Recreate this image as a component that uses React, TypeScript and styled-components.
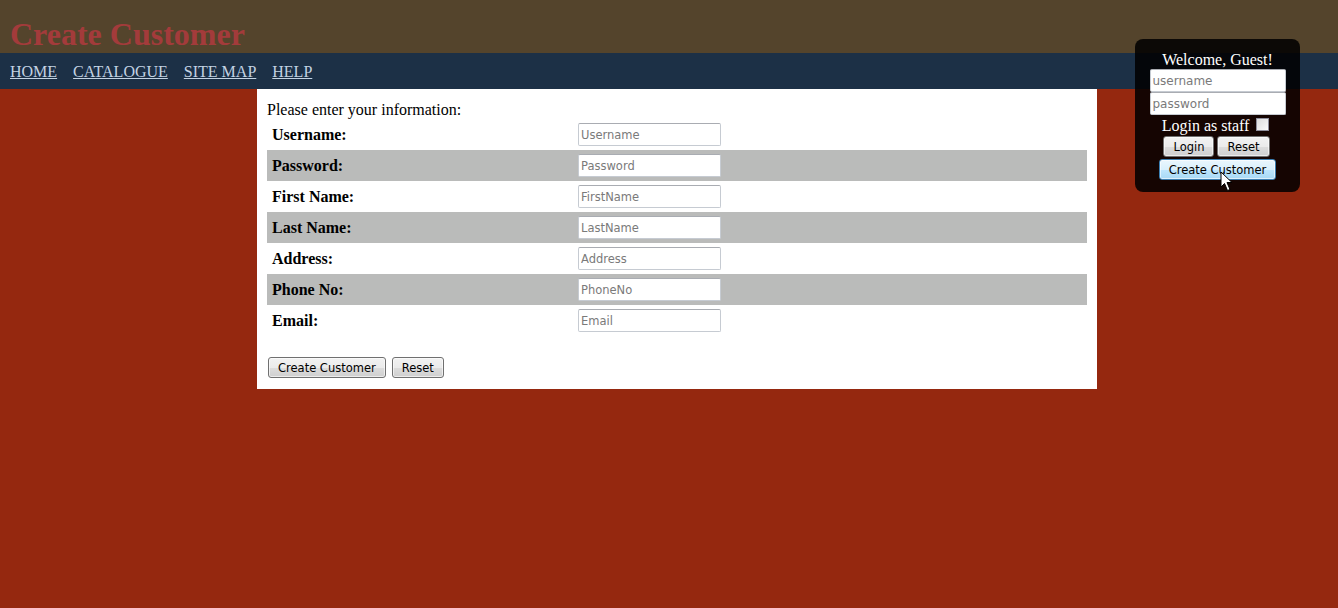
import React from "react";
import styled, { createGlobalStyle, css } from "styled-components";

const GlobalStyle = createGlobalStyle`
  html, body {
    margin: 0;
    padding: 0;
  }
  body {
    background: #95280f;
    font-family: "Liberation Serif", "Times New Roman", serif;
    font-size: 16px;
    min-height: 608px;
  }
`;

const fields = [
  { label: "Username:", placeholder: "Username", type: "text" },
  { label: "Password:", placeholder: "Password", type: "password" },
  { label: "First Name:", placeholder: "FirstName", type: "text" },
  { label: "Last Name:", placeholder: "LastName", type: "text" },
  { label: "Address:", placeholder: "Address", type: "text" },
  { label: "Phone No:", placeholder: "PhoneNo", type: "text" },
  { label: "Email:", placeholder: "Email", type: "text" },
];

const links = ["HOME", "CATALOGUE", "SITE MAP", "HELP"];

export default function App() {
  return (
    <Page>
      <GlobalStyle />
      <Header>
        <Title>Create Customer</Title>
      </Header>
      <Nav>
        {links.map((l) => (
          <NavLink key={l} href="#">
            {l}
          </NavLink>
        ))}
      </Nav>

      <Panel>
        <Intro>Please enter your information:</Intro>
        <FormTable>
          {fields.map((f, i) => (
            <Row key={f.label} $striped={i % 2 === 1}>
              <LabelCell>{f.label}</LabelCell>
              <InputCell>
                <TextInput type={f.type} placeholder={f.placeholder} />
              </InputCell>
            </Row>
          ))}
        </FormTable>
        <Actions>
          <Button>Create Customer</Button>
          <Button>Reset</Button>
        </Actions>
      </Panel>

      <LoginBox>
        <Welcome>Welcome, Guest!</Welcome>
        <BoxInput type="text" placeholder="username" />
        <BoxInput type="password" placeholder="password" />
        <StaffRow>
          Login as staff <Checkbox type="checkbox" />
        </StaffRow>
        <ButtonRow>
          <Button>Login</Button>
          <Button>Reset</Button>
        </ButtonRow>
        <Button $hover>Create Customer</Button>
        <Cursor width="14" height="21" viewBox="0 0 14 21">
          <path
            d="M1 1 L1 16 L4.5 12.5 L7.5 19.5 L10 18.5 L7 11.5 L12 11.5 Z"
            fill="#ffffff"
            stroke="#000000"
            strokeWidth="1"
            strokeLinejoin="round"
          />
        </Cursor>
      </LoginBox>
    </Page>
  );
}

const Page = styled.div`
  position: relative;
  min-height: 608px;
`;

const Header = styled.header`
  height: 53px;
  background: #54442c;
  box-sizing: border-box;
  padding: 18px 0 0 10px;
`;

const Title = styled.h1`
  margin: 0;
  font-size: 32px;
  line-height: 32px;
  font-weight: bold;
  color: #a33b3b;
`;

const Nav = styled.nav`
  height: 36px;
  background: #1c3046;
  display: flex;
  align-items: center;
  gap: 16px;
  padding: 2px 0 0 10px;
  box-sizing: border-box;
`;

const NavLink = styled.a`
  color: #c3d3e3;
  font-size: 16px;
  line-height: 18px;
  text-decoration: underline;
`;

const Panel = styled.main`
  width: 840px;
  margin-left: 257px;
  background: #ffffff;
  box-sizing: border-box;
  padding: 11px 10px 11px 10px;
  height: 300px;
`;

const Intro = styled.p`
  margin: 0;
  line-height: 19px;
  color: #000;
`;

const FormTable = styled.div`
  display: flex;
  flex-direction: column;
`;

const Row = styled.div<{ $striped?: boolean }>`
  display: grid;
  grid-template-columns: 311px 1fr;
  align-items: center;
  height: 31px;
  background: ${(p) => (p.$striped ? "#babbba" : "transparent")};
`;

const LabelCell = styled.div`
  padding-left: 5px;
  font-weight: bold;
  line-height: 18px;
  color: #000;
`;

const InputCell = styled.div`
  display: flex;
  align-items: center;
`;

const inputStyle = css`
  box-sizing: border-box;
  height: 23px;
  padding: 0 2px;
  margin: 0;
  background: #ffffff;
  border: 1px solid #c6cbd2;
  border-top-color: #a9acb2;
  border-radius: 2px;
  font-family: "DejaVu Sans", Verdana, sans-serif;
  font-size: 11.5px;
  color: #000;
  outline: none;
  &::placeholder {
    color: #7a7a7a;
  }
`;

const TextInput = styled.input`
  ${inputStyle};
  width: 143px;
`;

const Actions = styled.div`
  display: flex;
  gap: 6px;
  margin-top: 21px;
  padding-left: 1px;
`;

const Button = styled.button<{ $hover?: boolean }>`
  box-sizing: border-box;
  height: 21px;
  padding: 0 9px;
  margin: 0;
  font-family: "DejaVu Sans", Verdana, sans-serif;
  font-size: 11.5px;
  color: #000;
  border-radius: 3px;
  border: 1px solid ${(p) => (p.$hover ? "#3c7fb1" : "#707070")};
  background: ${(p) =>
    p.$hover
      ? "linear-gradient(#eaf6fd 0%, #d9f0fc 50%, #bee6fd 51%, #a7d9f5 100%)"
      : "linear-gradient(#f2f2f2 0%, #ebebeb 50%, #dddddd 51%, #cfcfcf 100%)"};
  box-shadow: inset 0 0 0 1px rgba(255, 255, 255, 0.6);
  cursor: default;
`;

const LoginBox = styled.aside`
  position: absolute;
  top: 39px;
  right: 38px;
  width: 165px;
  height: 153px;
  box-sizing: border-box;
  padding-top: 12px;
  background: rgba(0, 0, 0, 0.86);
  border-radius: 8px;
  display: flex;
  flex-direction: column;
  align-items: center;
`;

const Welcome = styled.div`
  color: #ffffff;
  line-height: 18px;
  font-size: 16px;
`;

const BoxInput = styled.input`
  ${inputStyle};
  width: 136px;
  font-size: 12px;
`;

const StaffRow = styled.label`
  display: flex;
  align-items: center;
  gap: 7px;
  color: #ffffff;
  font-size: 16px;
  line-height: 18px;
  margin-top: 2px;
  padding-right: 4px;
`;

const Checkbox = styled.input`
  appearance: none;
  width: 13px;
  height: 13px;
  margin: 0 0 3px 0;
  border: 1px solid #8f8f9d;
  background: linear-gradient(135deg, #dcdcdc, #fbfbfb);
  box-sizing: border-box;
`;

const ButtonRow = styled.div`
  display: flex;
  gap: 3px;
  margin: 1px 2px 2px 0;
`;

const Cursor = styled.svg`
  position: absolute;
  left: 85px;
  top: 132px;
  pointer-events: none;
`;
